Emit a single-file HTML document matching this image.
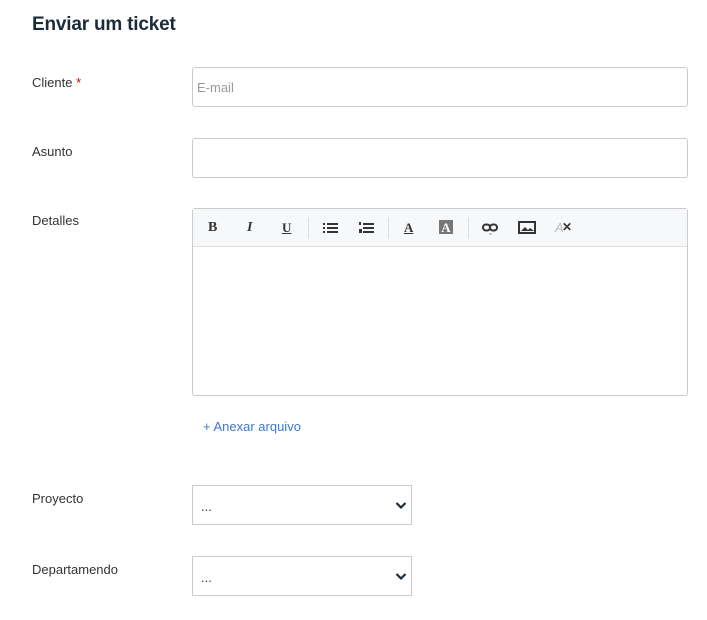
<!DOCTYPE html>
<html><head><style>
body{margin:0;width:707px;height:620px;background:#fff;font-family:"Liberation Sans",sans-serif;color:#333;position:relative;overflow:hidden}
.a{position:absolute}
h1{position:absolute;left:32px;top:14px;margin:0;font-size:19px;font-weight:bold;color:#1c2b3a;letter-spacing:-0.2px}
.lbl{position:absolute;left:32px;font-size:13px;color:#333}
.inp{position:absolute;left:192px;width:494px;height:38px;border:1px solid #ccc;border-radius:3px;background:#fff}
.sel{position:absolute;left:192px;width:218px;height:38px;border:1px solid #ccc;background:#fff}
.sel span{position:absolute;left:8px;top:13px;font-size:13px}
.sel svg{position:absolute;right:4px;top:15px}
.tb{position:absolute;top:11px;font-family:"Liberation Serif",serif;font-weight:bold;font-size:14px;color:#333}
.sep{position:absolute;top:9px;width:1px;height:20px;background:#ddd}
</style></head><body>
<h1>Enviar um ticket</h1>
<div class="lbl" style="top:75px">Cliente <span style="color:#c00">*</span></div>
<div class="inp" style="top:67px"><span class="a" style="left:4px;top:12px;font-size:13px;color:#999">E-mail</span></div>
<div class="lbl" style="top:144px">Asunto</div>
<div class="inp" style="top:138px"></div>
<div class="lbl" style="top:213px">Detalles</div>
<div class="a" style="left:192px;top:208px;width:494px;height:186px;border:1px solid #ccc;border-radius:3px">
 <div class="a" style="left:0;top:0;width:494px;height:37px;background:#f7f8f9;border-bottom:1px solid #ddd"></div>
 <span class="tb" style="left:15px">B</span>
 <span class="tb" style="left:54px;font-style:italic">I</span>
 <span class="tb" style="left:89px;text-decoration:underline;font-size:13px">U</span>
 <div class="sep" style="left:115px"></div>
 <svg class="a" style="left:130px;top:13px" width="15" height="11"><g fill="#333"><rect x="0" y="1" width="2" height="2"/><rect x="0" y="5" width="2" height="2"/><rect x="0" y="9" width="2" height="2"/><rect x="4" y="1" width="11" height="2"/><rect x="4" y="5" width="11" height="2"/><rect x="4" y="9" width="11" height="2"/></g></svg>
 <svg class="a" style="left:166px;top:13px" width="15" height="11"><g fill="#333"><rect x="0" y="0" width="2" height="3"/><rect x="0" y="7" width="3" height="4"/><rect x="4" y="1" width="11" height="2"/><rect x="4" y="5" width="11" height="2"/><rect x="4" y="9" width="11" height="2"/></g></svg>
 <div class="sep" style="left:195px"></div>
 <span class="tb" style="left:211px;font-size:13px;text-decoration:underline">A</span>
 <div class="a" style="left:246px;top:11px;width:14px;height:14px;background:#777;color:#fff;font-family:'Liberation Serif',serif;font-weight:bold;font-size:13px;text-align:center;line-height:15px">A</div>
 <div class="sep" style="left:275px"></div>
 <svg class="a" style="left:289px;top:14px" width="17" height="13"><g fill="none" stroke="#333" stroke-width="2"><rect x="1" y="1.5" width="7" height="6" rx="3"/><rect x="8" y="1.5" width="7" height="6" rx="3"/></g><path d="M7 11h3" stroke="#999"/></svg>
 <svg class="a" style="left:325px;top:12px" width="18" height="13"><rect x="1" y="1" width="16" height="11" fill="none" stroke="#333" stroke-width="2"/><path d="M3 10l4-4 3 3 2-2 4 3z" fill="#333"/></svg>
 <span class="a" style="left:362px;top:11px;font-size:13px;color:#bbb;font-style:italic">A</span><span class="a" style="left:369px;top:11px;font-size:12px;color:#333;font-weight:bold">✕</span>
</div>
<div class="a" style="left:203px;top:419px;font-size:13px;color:#3b78d8">+ Anexar arquivo</div>
<div class="lbl" style="top:491px">Proyecto</div>
<div class="sel" style="top:485px"><span>...</span><svg width="12" height="9"><path d="M1.5 2l4.5 4.5 4.5-4.5" fill="none" stroke="#1c2b3a" stroke-width="2.2"/></svg></div>
<div class="lbl" style="top:562px">Departamendo</div>
<div class="sel" style="top:556px"><span>...</span><svg width="12" height="9"><path d="M1.5 2l4.5 4.5 4.5-4.5" fill="none" stroke="#1c2b3a" stroke-width="2.2"/></svg></div>
</body></html>
